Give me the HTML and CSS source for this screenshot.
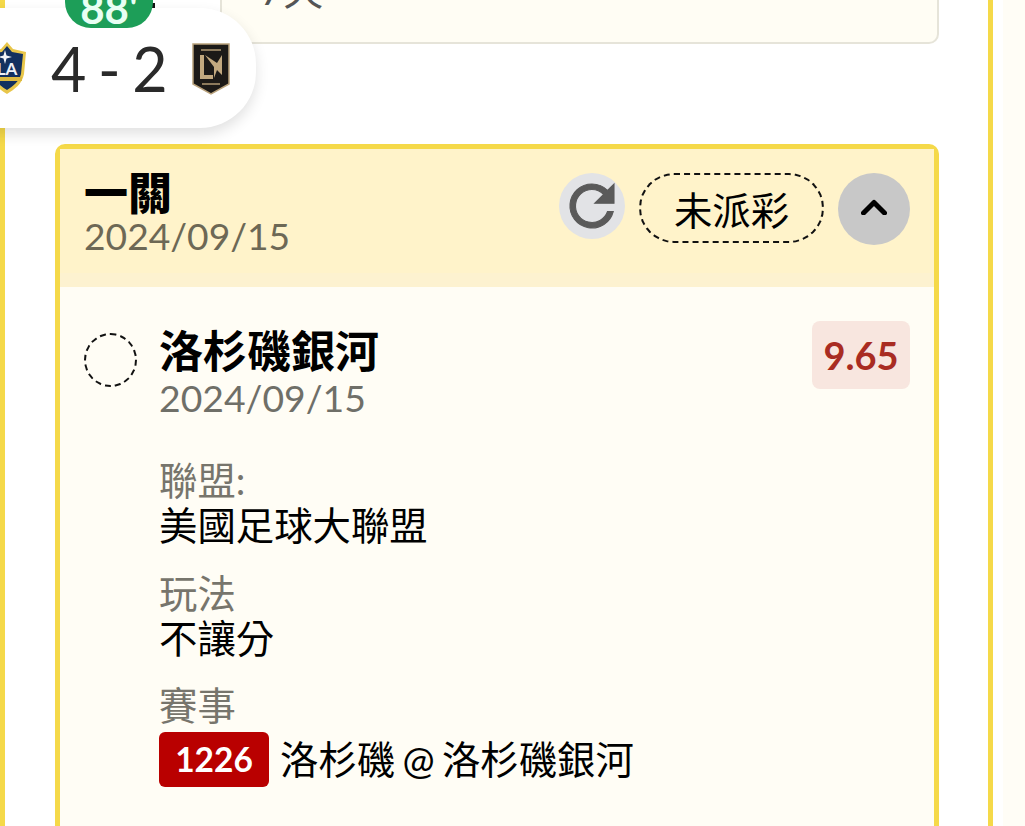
FILE: index.html
```html
<!DOCTYPE html>
<html lang="zh-Hant">
<head>
<meta charset="utf-8">
<title>一關</title>
<link rel="stylesheet" href="styles.css">
</head>
<body>
<div class="page">
  <main class="frame">
    <section class="top-card"><span class="top-text">7天</span></section>

    <section class="bet">
      <header class="bet-head">
        <div class="bet-title">
          <h1 class="title">一關</h1>
          <p class="date">2024/09/15</p>
        </div>
        <button class="refresh" aria-label="refresh">
          <svg viewBox="0 0 24 24" width="66" height="66"><path class="refresh-path" d="M17.65 6.35A7.96 7.96 0 0 0 12 4a8 8 0 1 0 7.73 10h-2.08A6 6 0 1 1 12 6c1.66 0 3.14.69 4.22 1.78L13 11h7V4l-2.35 2.35z"/></svg>
        </button>
        <span class="status">未派彩</span>
        <button class="collapse" aria-label="collapse">
          <svg viewBox="0 0 26 16" width="26" height="16"><path class="chevron" d="M2.5 14 13 3.5 23.5 14"/></svg>
        </button>
      </header>

      <div class="bet-body">
        <div class="leg">
          <span class="radio"></span>
          <div class="leg-main">
            <div class="leg-name">洛杉磯銀河</div>
            <div class="leg-date">2024/09/15</div>
            <dl class="info">
              <dt>聯盟:</dt><dd>美國足球大聯盟</dd>
              <dt>玩法</dt><dd>不讓分</dd>
              <dt>賽事</dt><dd class="match"><span class="code">1226</span><span class="teams">洛杉磯 @ 洛杉磯銀河</span></dd>
            </dl>
          </div>
          <span class="odds">9.65</span>
        </div>
      </div>
    </section>
  </main>

  <aside class="score">
    <span class="minute">88<i class="tick">'</i></span>
    <svg class="crest-la" viewBox="0 0 38 52" width="38" height="52">
      <path d="M19 0 25 7 38 10 36 32C34 42 27 47 19 52 11 47 4 42 2 32L0 10 13 7Z" fill="#e8c64a"/>
      <path d="M19 4 24 10 35 12 33 32C31 40 25 44 19 48 13 44 7 40 5 32L3 12 14 10Z" fill="#12305f"/>
      <path d="M17 8 18.5 13.5 24 15 18.5 16.5 17 22 15.5 16.5 10 15 15.5 13.5Z" fill="#f2f4f8"/>
      <text class="la-text" x="19" y="33">LA</text>
      <rect x="4" y="35" width="30" height="4" fill="#dcb93f"/>
    </svg>
    <span class="result">4 - 2</span>
    <svg class="crest-lafc" viewBox="0 0 38 52" width="38" height="52">
      <path d="M1 1H37V41L19 51 1 41Z" fill="#1c1a17" stroke="#b9a27c" stroke-width="1.5"/>
      <path d="M8 12H12V32H21V36H8Z" fill="#c2a97f"/>
      <path d="M13 12 22 24V35L25 27 30 32V12L25 20 Z" fill="#c2a97f"/>
      <rect x="9" y="6" width="20" height="2" fill="#8c7a5c"/>
      <rect x="10" y="40" width="18" height="2" fill="#8c7a5c"/>
    </svg>
  </aside>
</div>
</body>
</html>
```

FILE: styles.css
```css
* { box-sizing: border-box; }

html, body { margin: 0; padding: 0; background: #fff; }

body {
  font-family: "Lato", "Noto Sans CJK TC", sans-serif;
  color: #000;
}

.page {
  position: relative;
  width: 1025px;
  height: 826px;
  overflow: hidden;
  background: linear-gradient(to right, #fff 1003px, #fffdf6 1003px);
}

.frame {
  width: 993px;
  height: 826px;
  border-left: 5px solid #f5d949;
  border-right: 5px solid #f5d949;
  background: #fff;
  padding: 0 49px 0 50px;
}

.top-card {
  height: 44px;
  margin-left: 165px;
  background: #fffdf4;
  border: 2px solid #e6e4d9;
  border-top: 0;
  border-radius: 0 0 10px 10px;
  overflow: hidden;
  padding-left: 38px;
}

.top-text {
  display: block;
  margin-top: -30px;
  font-size: 40px;
  line-height: 40px;
  color: #555;
}

.bet {
  margin-top: 100px;
  height: 740px;
  border: 5px solid #f5d949;
  border-radius: 10px;
  background: #fffdf5;
}

.bet-head {
  display: flex;
  align-items: flex-start;
  height: 138px;
  padding: 18px 24px 0 24px;
  background: #fff3ca;
  border-bottom: 14px solid #fdf2d0;
}

.bet-title { flex: 1; }

.title {
  margin: 0;
  font-size: 44px;
  line-height: 48px;
  font-weight: 900;
  font-family: "Noto Sans CJK TC", sans-serif;
}

.date {
  margin: 0;
  font-size: 37.2px;
  line-height: 42px;
  color: #6d6855;
}

.refresh {
  display: flex;
  align-items: center;
  justify-content: center;
  width: 66px;
  height: 66px;
  margin: 6px 14px 0 0;
  padding: 0;
  border: 0;
  border-radius: 50%;
  background: #e2e3e6;
}

.refresh-path {
  fill: #5a5a5a;
  stroke: #5a5a5a;
  stroke-width: 0.4;
}

.status {
  display: flex;
  align-items: center;
  justify-content: center;
  width: 185px;
  height: 70px;
  margin: 6px 14px 0 0;
  border: 2px dashed #111;
  border-radius: 36px;
  font-size: 38.4px;
  font-family: "Noto Sans CJK TC", sans-serif;
}

.collapse {
  display: flex;
  align-items: center;
  justify-content: center;
  width: 72px;
  height: 72px;
  margin-top: 6px;
  padding: 0 0 4px;
  border: 0;
  border-radius: 50%;
  background: #c8c8c8;
}

.chevron {
  fill: none;
  stroke: #000;
  stroke-width: 5;
  stroke-linecap: round;
  stroke-linejoin: round;
}

.bet-body { padding: 34px 24px 0 24px; }

.leg { display: flex; align-items: flex-start; }

.radio {
  flex: none;
  width: 53px;
  height: 54px;
  margin: 12px 22px 0 0;
  border: 2px dashed #111;
  border-radius: 50%;
}

.leg-main { flex: 1; }

.leg-name {
  margin-top: 2px;
  font-size: 44px;
  line-height: 52px;
  font-weight: 700;
  font-family: "Noto Sans CJK TC", sans-serif;
}

.leg-date {
  font-size: 37.3px;
  line-height: 46px;
  color: #6f6f68;
}

.info { margin: 37px 0 0; }

.info dt {
  font-size: 38.4px;
  line-height: 45px;
  color: #77756c;
}

.info dd {
  margin: 0 0 22.5px;
  font-size: 38.4px;
  line-height: 45px;
}

.info .match {
  display: flex;
  align-items: center;
  margin-top: 4px;
}

.teams { word-spacing: -2.5px; }

.code {
  display: inline-block;
  width: 110px;
  height: 55px;
  margin-right: 11px;
  background: #b90000;
  color: #fff;
  border-radius: 6px;
  font-size: 33.5px;
  line-height: 55px;
  font-weight: 700;
  text-align: center;
}

.odds {
  flex: none;
  width: 98px;
  height: 68px;
  background: #f8e6df;
  color: #a92c22;
  border-radius: 8px;
  font-size: 38px;
  line-height: 68px;
  font-weight: 700;
  text-align: center;
}

.score {
  position: absolute;
  left: -30px;
  top: 8px;
  display: flex;
  align-items: center;
  width: 286px;
  height: 120px;
  padding-left: 18px;
  background: #fff;
  border-radius: 0 56px 56px 0;
  box-shadow: 0 6px 14px rgba(0, 0, 0, 0.12);
}

.score::before {
  content: "";
  position: absolute;
  left: 182px;
  top: -5px;
  width: 3px;
  height: 5px;
  background: #111;
}

.minute {
  position: absolute;
  left: 95px;
  top: -22px;
  width: 88px;
  height: 42px;
  background: #1d9e58;
  border-radius: 0 0 26px 26px;
  color: #e8fff3;
  font-size: 42px;
  line-height: 44px;
  font-weight: 700;
  text-align: center;
  overflow: hidden;
}

.tick { font-style: normal; }

.crest-la {
  flex: none;
  margin-right: 25px;
}

.result {
  flex: none;
  font-size: 61px;
  font-weight: 400;
  color: #2a2a2a;
  white-space: nowrap;
  word-spacing: -4px;
}

.crest-lafc {
  flex: none;
  margin-left: 24px;
  margin-top: 1px;
}

.la-text {
  fill: #eef1f6;
  font-size: 17px;
  font-weight: 700;
  text-anchor: middle;
}
```
